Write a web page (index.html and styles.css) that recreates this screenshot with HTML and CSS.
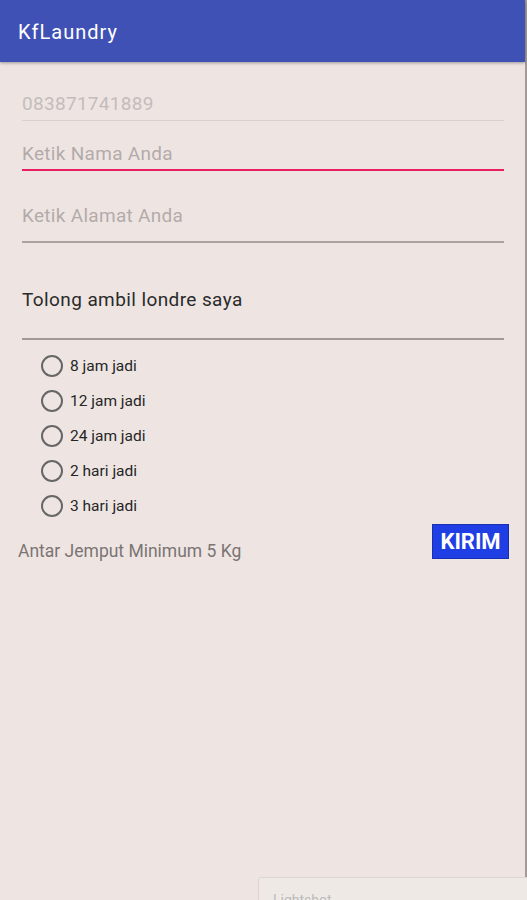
FILE: index.html
```html
<!DOCTYPE html>
<html>
<head>
<meta charset="utf-8">
<link rel="stylesheet" href="styles.css">
</head>
<body>
<div class="screen">
  <header class="appbar"><span class="title">KfLaundry</span></header>
  <main class="content">
    <div class="field field-phone"><span class="hint">083871741889</span></div>
    <div class="field field-name"><span class="hint">Ketik Nama Anda</span></div>
    <div class="field field-addr"><span class="hint">Ketik Alamat Anda</span></div>
    <div class="field field-note"><span class="value">Tolong ambil londre saya</span></div>
    <ul class="radios">
      <li><span class="radio"></span>8 jam jadi</li>
      <li><span class="radio"></span>12 jam jadi</li>
      <li><span class="radio"></span>24 jam jadi</li>
      <li><span class="radio"></span>2 hari jadi</li>
      <li><span class="radio"></span>3 hari jadi</li>
    </ul>
    <div class="footer-row">
      <span class="info">Antar Jemput Minimum 5 Kg</span>
      <button class="kirim">KIRIM</button>
    </div>
  </main>
  <div class="lightshot"><span>Lightshot</span></div>
</div>
</body>
</html>
```

FILE: styles.css
```css
html, body {
  margin: 0;
  padding: 0;
}
body {
  width: 527px;
  height: 900px;
  overflow: hidden;
  background: #eee5e3;
  font-family: Roboto, "Liberation Sans", sans-serif;
}
.screen {
  position: relative;
  width: 525px;
  height: 900px;
  border-right: 2px solid #a39b99;
  box-sizing: content-box;
}
.appbar {
  height: 62px;
  background: #3f51b5;
  display: flex;
  align-items: center;
  padding-left: 18px;
  box-shadow: 0 1px 3px rgba(0,0,0,0.35);
  position: relative;
  z-index: 1;
}
.title {
  color: #fff;
  font-size: 20px;
  letter-spacing: 1px;
  padding-top: 2px;
}
.content {
  padding: 0 21px 0 22px;
}
.field {
  display: flex;
  align-items: flex-end;
  font-size: 19px;
  line-height: 22px;
  letter-spacing: 0.3px;
}
.hint {
  color: #b3abaa;
}
.field-phone {
  height: 53px;
  padding-bottom: 5px;
  border-bottom: 1px solid #d8d0ce;
}
.field-phone .hint { color: #c4bcbb; }
.field-name {
  height: 44px;
  padding-bottom: 4px;
  border-bottom: 2px solid #e91e63;
}
.field-addr {
  height: 56px;
  padding-bottom: 14px;
  border-bottom: 2px solid #aaa3a1;
}
.field-note {
  height: 68px;
  padding-bottom: 27px;
  border-bottom: 2px solid #9f9896;
  letter-spacing: 0.4px;
}
.value {
  color: #2a2a2a;
}
.radios {
  list-style: none;
  margin: 0;
  padding: 8px 0 0 19px;
}
.radios li {
  display: flex;
  align-items: center;
  height: 35px;
  font-size: 15.5px;
  color: #262626;
}
.radio {
  width: 18px;
  height: 18px;
  border: 2px solid #666;
  border-radius: 50%;
  margin-right: 7px;
  flex: none;
}
.footer-row {
  display: flex;
  justify-content: space-between;
  align-items: flex-start;
  margin: 1px -5px 0 -4px;
}
.info {
  color: #7b7473;
  font-size: 17.5px;
  padding-top: 17px;
}
.kirim {
  width: 77px;
  height: 35px;
  background: #1f3fe5;
  border: 1px solid #1a2fb0;
  color: #fff;
  font-family: Roboto, "Liberation Sans", sans-serif;
  font-weight: bold;
  font-size: 22px;
  padding: 0;
}
.lightshot {
  position: absolute;
  left: 258px;
  top: 877px;
  width: 280px;
  height: 40px;
  background: #efe9e6;
  border: 1px solid #ddd5d3;
  border-radius: 3px;
  padding: 14px 0 0 14px;
  box-sizing: border-box;
  font-size: 14px;
  color: #bbb;
}
```
